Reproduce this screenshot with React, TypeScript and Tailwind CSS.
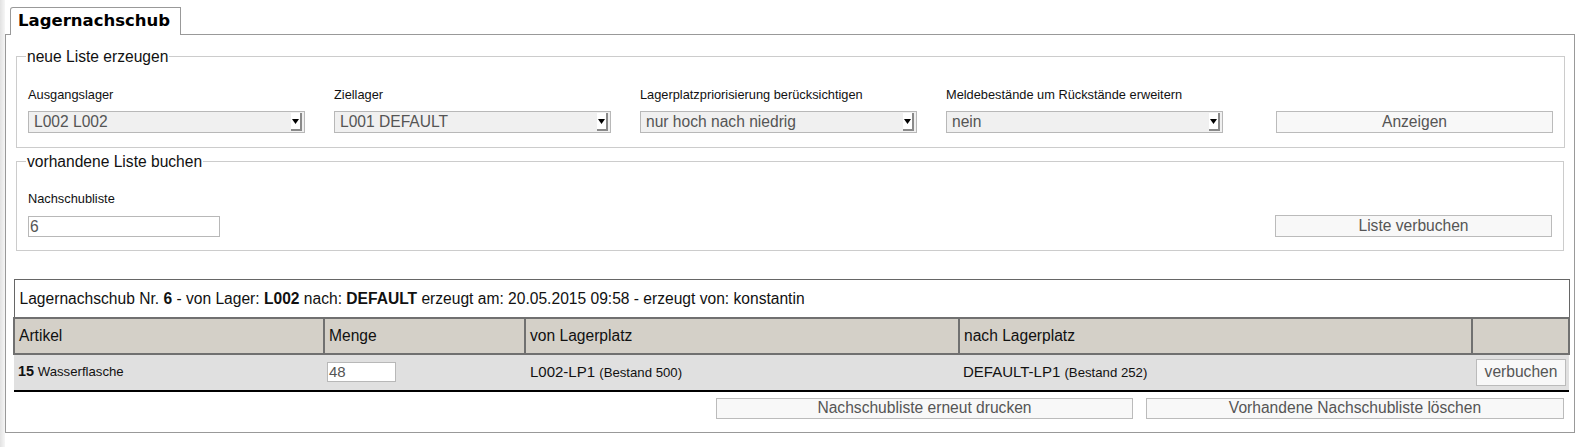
import React from 'react';

const font = { fontFamily: '"Liberation Sans", Arial, sans-serif' };

function SelectBox({ value }: { value: string }) {
  return (
    <div className="relative flex h-[22px] w-[277px] items-center border border-[#b8b8b8] bg-[#f0f0f0] pl-[5px] text-[15.6px] text-[#555]">
      <span>{value}</span>
      <div className="absolute right-[2px] top-[1px] flex h-[18px] w-[11px] items-center justify-center border-b-2 border-r-2 border-[#8a8a8a] bg-white">
        <svg width="7" height="5" viewBox="0 0 7 5">
          <path d="M0 0 H7 L3.5 5 Z" fill="#000" />
        </svg>
      </div>
    </div>
  );
}

function Btn({ label, className }: { label: string; className: string }) {
  return (
    <button
      className={`flex items-center justify-center border border-[#bbb] bg-[#f8f8f8] text-[15.6px] text-[#555] ${className}`}
    >
      {label}
    </button>
  );
}

export default function App() {
  const fields = [
    { label: 'Ausgangslager', value: 'L002 L002' },
    { label: 'Ziellager', value: 'L001 DEFAULT' },
    { label: 'Lagerplatzpriorisierung berücksichtigen', value: 'nur hoch nach niedrig' },
    { label: 'Meldebestände um Rückstände erweitern', value: 'nein' },
  ];

  return (
    <div className="flex h-[447px] w-[1586px] bg-white text-[#111]" style={font}>
      <div className="w-[5px] bg-gradient-to-r from-[#e2e2e2] to-[#f6f6f6]" />
      <div className="flex flex-col pt-[7px]">
        {/* tab */}
        <div
          className="relative z-10 -mb-px ml-[5px] flex h-[28px] w-[171px] items-center rounded-tl-[3px] border border-b-0 border-[#999] bg-white pl-[7px] text-[16.5px] font-bold text-black"
          style={{ fontFamily: '"DejaVu Sans", sans-serif' }}
        >
          Lagernachschub
        </div>

        <div className="h-[399px] w-[1570px] border border-[#999] px-[10px] pt-[12px]">
          {/* neue Liste erzeugen */}
          <fieldset className="border border-[#ccc] px-[11px] pb-[14px] pt-[21px]">
            <legend className="-ml-[2px] px-[1px] text-[15.6px] leading-[19px] text-[#111]">neue Liste erzeugen</legend>
            <div className="flex items-end">
              {fields.map((f) => (
                <div key={f.label} className="w-[306px]">
                  <div className="mb-[9px] text-[12.8px] leading-[15px] text-[#111]">{f.label}</div>
                  <SelectBox value={f.value} />
                </div>
              ))}
              <Btn label="Anzeigen" className="ml-[24px] h-[22px] w-[277px]" />
            </div>
          </fieldset>

          {/* vorhandene Liste buchen */}
          <fieldset className="mt-[4px] border border-[#ccc] px-[11px] pb-[13px] pt-[20px]">
            <legend className="-ml-[2px] px-[1px] text-[15.6px] leading-[19px] text-[#111]">vorhandene Liste buchen</legend>
            <div className="flex items-end justify-between">
              <div>
                <div className="mb-[10px] text-[12.8px] leading-[15px] text-[#111]">Nachschubliste</div>
                <div className="flex h-[21px] w-[192px] items-center border border-[#b8b8b8] bg-white pl-[1px] text-[15.6px] text-[#555]">
                  6
                </div>
              </div>
              <Btn label="Liste verbuchen" className="h-[22px] w-[277px]" />
            </div>
          </fieldset>

          {/* Tabelle */}
          <div className="-ml-[3px] mt-[28px] w-[1555px]">
            <table className="w-full table-fixed border-collapse text-left">
              <colgroup>
                <col className="w-[310px]" />
                <col className="w-[201px]" />
                <col className="w-[434px]" />
                <col className="w-[513px]" />
                <col className="w-[97px]" />
              </colgroup>
              <thead>
                <tr>
                  <th colSpan={5} className="h-[38px] border border-[#666] bg-white pl-[5px] text-[15.6px] font-normal text-[#111]">
                    Lagernachschub Nr. <b>6</b> - von Lager: <b>L002</b> nach: <b>DEFAULT</b> erzeugt am: 20.05.2015 09:58 - erzeugt von: konstantin
                  </th>
                </tr>
                <tr className="bg-[#d4d0c8]">
                  {['Artikel', 'Menge', 'von Lagerplatz', 'nach Lagerplatz', ''].map((h, i) => (
                    <th key={i} className="h-[36px] border-2 border-[#707070] pl-[4px] text-[15.6px] font-normal text-[#111]">
                      {h}
                    </th>
                  ))}
                </tr>
              </thead>
              <tbody>
                <tr className="h-[37px] border-b-2 border-black bg-[#e0e0e0]">
                  <td className="pl-[4px] text-[13.2px]">
                    <b className="text-[14.4px]">15</b> Wasserflasche
                  </td>
                  <td className="pl-[3px]">
                    <div className="flex h-[20px] w-[69px] items-center border border-[#b8b8b8] bg-white pl-[1px] text-[15px] text-[#555]">
                      48
                    </div>
                  </td>
                  <td className="pl-[5px] text-[15px]">
                    L002-LP1 <span className="text-[13.2px]">(Bestand 500)</span>
                  </td>
                  <td className="pl-[4px] text-[15px]">
                    DEFAULT-LP1 <span className="text-[13.2px]">(Bestand 252)</span>
                  </td>
                  <td className="pl-[4px]">
                    <Btn label="verbuchen" className="h-[27px] w-[90px]" />
                  </td>
                </tr>
              </tbody>
            </table>
            <div className="mt-[6px] flex justify-end gap-[13px] pr-[4px]">
              <Btn label="Nachschubliste erneut drucken" className="h-[21px] w-[417px]" />
              <Btn label="Vorhandene Nachschubliste löschen" className="h-[21px] w-[418px]" />
            </div>
          </div>
        </div>
      </div>
    </div>
  );
}
